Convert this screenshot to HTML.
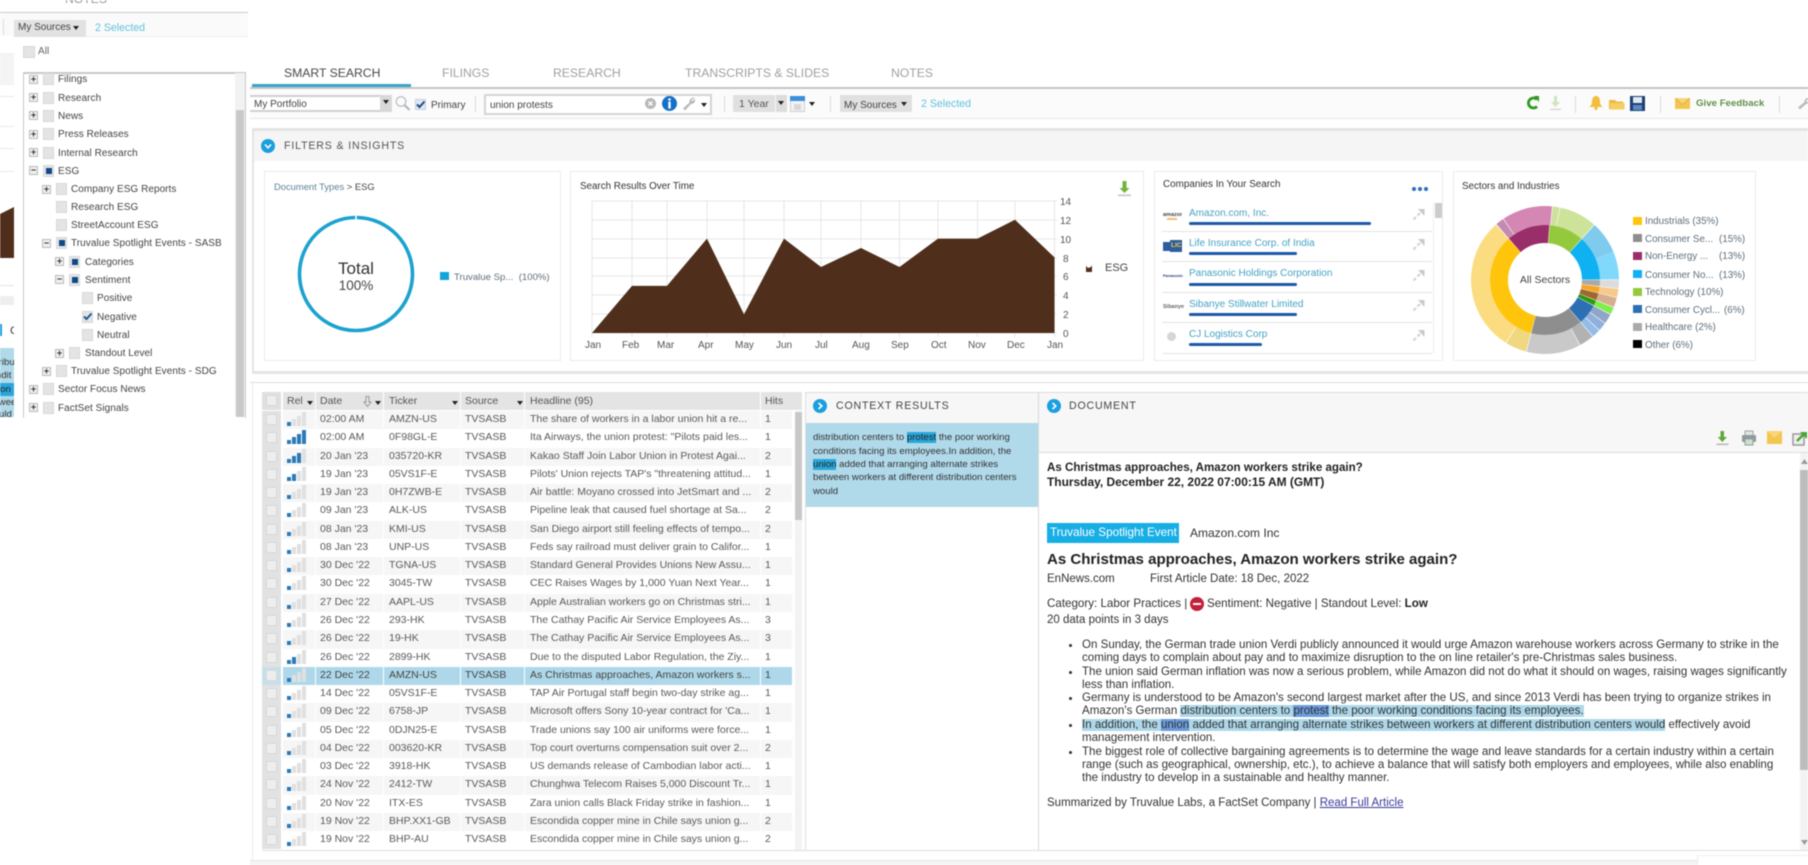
<!DOCTYPE html>
<html><head><meta charset="utf-8"><title>Smart Search</title>
<style>
html,body{margin:0;padding:0;background:#fff}
#p{position:relative;width:1808px;height:865px;overflow:hidden;background:#fff;font-family:"Liberation Sans",sans-serif;color:#444;filter:blur(.45px)}
#p div,#p span.a,#p svg.a{position:absolute}
.t{white-space:nowrap;line-height:14px;height:14px}
.b{box-sizing:border-box}
.cb{box-sizing:border-box;width:11px;height:12px;background:#e4e4e4;border:1px solid #d8d8d8}
.ex{box-sizing:border-box;width:9px;height:9px;border:1px solid #bbb;background:#eee;font-size:9px;line-height:7px;text-align:center;color:#333;font-weight:bold}
.in{width:6px;height:6px;left:2px;top:2px;background:#0d4a87}
.tr{font-size:10px;letter-spacing:.05px;color:#444;margin-top:1px}
.tab{font-size:12.2px;color:#a0a0a0;top:66px}
.lg{font-size:9.8px;color:#5f6f7c;margin-top:1px}
.sq{width:9px;height:8px}
.ax{font-size:10px;color:#555;margin-top:1px}
.co{font-size:10px;color:#45a3c4;left:1189px;margin-top:1px}
.bar{left:1189px;height:3px;background:#1c5aa8;border-radius:2px}
.rl{left:1162px;width:270px;height:1px;background:#e4e4e4}
.r{left:262px;width:530px;height:18.27px;font-size:10.5px;color:#5a5a5a}
.r span{position:absolute;top:1px;line-height:14px;white-space:nowrap}
.r .ck{left:0;top:0;width:19px;height:18.27px;background:#e2e2e2}
.r .ck i{position:absolute;left:4px;top:3px;width:11px;height:11px;box-sizing:border-box;background:#eee;border:1px solid #d8d8d8}
.r svg{position:absolute;left:25px;top:1px}
.r .d{left:58px}.r .k{left:127px}.r .s{left:203px}.r .h{left:268px}.r .n{left:503px}
.o{background:#f6f6f6}.sel{background:#aed8ea;color:#444}.sel .ck{background:#c8dfe9}
.hd{top:392px;height:18px;background:#e4e4e4;font-size:10.5px;color:#555;line-height:18px;white-space:nowrap}
.vl{top:392px;height:458px;width:1px;background:#fff}
.dl{left:1082px;font-size:11.56px;color:#333;line-height:13px;height:13px;white-space:nowrap}
.bu{left:1068px;width:3px;height:3px;background:#333;border-radius:50%}
.hl{background:#aed8ea}.w{background:#6b9bdc}
.ctx{left:813px;font-size:9.6px;color:#333;line-height:13px;white-space:nowrap}
.arr{width:0;height:0;border-left:3px solid transparent;border-right:3px solid transparent;border-top:4px solid #222}
.sep{width:1px;background:#ddd}
</style></head><body><div id="p">
<svg width="0" height="0" style="position:absolute"><defs>
<symbol id="r1" viewBox="0 0 20 14"><rect x="0" y="10" width="4" height="4" fill="#2a7ab8"/><rect x="5" y="7" width="4" height="7" fill="#e0e0e0"/><rect x="10" y="4" width="4" height="10" fill="#e0e0e0"/><rect x="15" y="0" width="4" height="14" fill="#e0e0e0"/></symbol>
<symbol id="r2" viewBox="0 0 20 14"><rect x="0" y="10" width="4" height="4" fill="#2a7ab8"/><rect x="5" y="7" width="4" height="7" fill="#2a7ab8"/><rect x="10" y="4" width="4" height="10" fill="#e0e0e0"/><rect x="15" y="0" width="4" height="14" fill="#e0e0e0"/></symbol>
<symbol id="r3" viewBox="0 0 20 14"><rect x="0" y="10" width="4" height="4" fill="#2a7ab8"/><rect x="5" y="7" width="4" height="7" fill="#2a7ab8"/><rect x="10" y="4" width="4" height="10" fill="#2a7ab8"/><rect x="15" y="0" width="4" height="14" fill="#e0e0e0"/></symbol>
<symbol id="r4" viewBox="0 0 20 14"><rect x="0" y="10" width="4" height="4" fill="#2a7ab8"/><rect x="5" y="7" width="4" height="7" fill="#2a7ab8"/><rect x="10" y="4" width="4" height="10" fill="#2a7ab8"/><rect x="15" y="0" width="4" height="14" fill="#2a7ab8"/></symbol>
<symbol id="exp" viewBox="0 0 14 12"><path d="M13.5 0 L13.5 7 L7 0Z" fill="#c9c9c9"/><path d="M9 4 L6.5 6.5 M5 8 L2.5 10.5" stroke="#d4d4d4" stroke-width="2.2"/></symbol>
</defs></svg>

<!-- left strip behind popup -->
<div style="left:0;top:12px;width:248px;height:1px;background:#c9c9c9"></div>
<div class="t" style="left:65px;top:-8px;font-size:12.2px;color:#999">NOTES</div>
<div style="left:0;top:13px;width:248px;height:23px;background:#fafafa"></div>
<div style="left:3px;top:19px;width:1px;height:16px;background:#ddd"></div>
<div style="left:0;top:53px;width:14px;height:32px;background:#f4f4f4"></div>
<div style="left:0;top:96px;width:14px;height:1px;background:#e8e8e8"></div>
<div style="left:0;top:126px;width:14px;height:1px;background:#e8e8e8"></div>
<div style="left:0;top:148px;width:14px;height:1px;background:#e8e8e8"></div>
<div style="left:0;top:171px;width:14px;height:1px;background:#e8e8e8"></div>
<svg class="a" style="left:0;top:200px" width="14" height="62"><path d="M0 14 L14 7 V58 H0Z" fill="#4f2f1c"/></svg>
<div style="left:0;top:285px;width:14px;height:1px;background:#e4e4e4"></div>
<div style="left:0;top:296px;width:14px;height:9px;background:#eee"></div>
<div class="t" style="left:10px;top:324px;font-size:11px;color:#333">C</div>
<div style="left:0;top:324px;width:2px;height:12px;background:#1b9fe0"></div>
<div style="left:0;top:348px;width:14px;height:69px;background:#b0d9ea;overflow:hidden">
 <div class="ctx" style="left:-4px;top:8px;color:#333">tribu</div>
 <div class="ctx" style="left:-4px;top:21px;color:#333">ndit</div>
 <div class="ctx" style="left:-2px;top:35px;background:#29a7dc;width:16px;color:#222">ion</div>
 <div class="ctx" style="left:-4px;top:48px;color:#333">twee</div>
 <div class="ctx" style="left:-1px;top:60px;color:#333">uld</div>
</div>

<!-- popup -->
<div style="left:14px;top:36px;width:234px;height:381px;background:#fff"></div>
<div style="left:86px;top:36px;width:162px;height:1px;background:#eee"></div>
<div class="b" style="left:14px;top:20px;width:72px;height:17px;background:#e2e2e2"></div>
<div class="t" style="left:18px;top:21px;font-size:10px;color:#444">My Sources</div>
<div class="arr" style="left:73px;top:26px"></div>
<div class="t" style="left:95px;top:21px;font-size:10.6px;color:#62c3df">2 Selected</div>
<div class="cb" style="left:23px;top:46px;width:12px;height:12px"></div>
<div class="t tr" style="left:38px;top:44px;color:#666">All</div>
<div class="b" style="left:23px;top:72px;width:223px;height:346px;border:1px solid #c8c8c8;border-top-width:2px;border-bottom:0"></div>
<div style="left:235px;top:73px;width:10px;height:344px;background:#f2f2f2"></div>
<div style="left:236px;top:110px;width:8px;height:307px;background:#c9c9c9"></div>

<div class="ex" style="left:29px;top:75px">+</div><div class="cb" style="left:43px;top:73px"></div><div class="t tr" style="left:58px;top:72px">Filings</div>
<div class="ex" style="left:29px;top:93px">+</div><div class="cb" style="left:43px;top:92px"></div><div class="t tr" style="left:58px;top:91px">Research</div>
<div class="ex" style="left:29px;top:111px">+</div><div class="cb" style="left:43px;top:110px"></div><div class="t tr" style="left:58px;top:109px">News</div>
<div class="ex" style="left:29px;top:130px">+</div><div class="cb" style="left:43px;top:128px"></div><div class="t tr" style="left:58px;top:127px">Press Releases</div>
<div class="ex" style="left:29px;top:148px">+</div><div class="cb" style="left:43px;top:147px"></div><div class="t tr" style="left:58px;top:146px">Internal Research</div>
<div class="ex" style="left:29px;top:166px">−</div><div class="cb" style="left:43px;top:165px"><div class="in" style="left:1.5px;top:2px"></div></div><div class="t tr" style="left:58px;top:164px">ESG</div>
<div class="ex" style="left:42px;top:185px">+</div><div class="cb" style="left:56px;top:183px"></div><div class="t tr" style="left:71px;top:182px">Company ESG Reports</div>
<div class="cb" style="left:56px;top:201px"></div><div class="t tr" style="left:71px;top:200px">Research ESG</div>
<div class="cb" style="left:56px;top:219px"></div><div class="t tr" style="left:71px;top:218px">StreetAccount ESG</div>
<div class="ex" style="left:42px;top:239px">−</div><div class="cb" style="left:56px;top:237px"><div class="in" style="left:1.5px;top:2px"></div></div><div class="t tr" style="left:71px;top:236px">Truvalue Spotlight Events - SASB</div>
<div class="ex" style="left:55px;top:257px">+</div><div class="cb" style="left:69px;top:256px"><div class="in" style="left:1.5px;top:2px"></div></div><div class="t tr" style="left:85px;top:255px">Categories</div>
<div class="ex" style="left:55px;top:275px">−</div><div class="cb" style="left:69px;top:274px"><div class="in" style="left:1.5px;top:2px"></div></div><div class="t tr" style="left:85px;top:273px">Sentiment</div>
<div class="cb" style="left:82px;top:292px"></div><div class="t tr" style="left:97px;top:291px">Positive</div>
<div class="cb" style="left:82px;top:311px"></div><svg class="a" style="left:82px;top:311px" width="11" height="11"><path d="M2 5.5 L4.5 8 L9.5 2.5" fill="none" stroke="#1d5b96" stroke-width="2"/></svg><div class="t tr" style="left:97px;top:310px">Negative</div>
<div class="cb" style="left:82px;top:329px"></div><div class="t tr" style="left:97px;top:328px">Neutral</div>
<div class="ex" style="left:55px;top:349px">+</div><div class="cb" style="left:69px;top:347px"></div><div class="t tr" style="left:85px;top:346px">Standout Level</div>
<div class="ex" style="left:42px;top:367px">+</div><div class="cb" style="left:56px;top:365px"></div><div class="t tr" style="left:71px;top:364px">Truvalue Spotlight Events - SDG</div>
<div class="ex" style="left:29px;top:385px">+</div><div class="cb" style="left:43px;top:383px"></div><div class="t tr" style="left:58px;top:382px">Sector Focus News</div>
<div class="ex" style="left:29px;top:403px">+</div><div class="cb" style="left:43px;top:402px"></div><div class="t tr" style="left:58px;top:401px">FactSet Signals</div>

<!-- tabs -->
<div class="t tab" style="left:284px;color:#4a4a4a">SMART SEARCH</div>
<div class="t tab" style="left:442px">FILINGS</div>
<div class="t tab" style="left:553px">RESEARCH</div>
<div class="t tab" style="left:685px">TRANSCRIPTS &amp; SLIDES</div>
<div class="t tab" style="left:891px">NOTES</div>
<div style="left:250px;top:87px;width:1558px;height:2px;background:#c4c4c4"></div>
<div style="left:252px;top:84px;width:159px;height:3px;background:#38a6c9"></div>

<!-- toolbar -->
<div style="left:250px;top:89px;width:1558px;height:29px;background:#fbfbfb;border-bottom:1px solid #e6e6e6"></div>
<div class="b" style="left:250px;top:95px;width:142px;height:17px;background:#fff;border:1px solid #d0d0d0;border-width:2px 1px 2px 0"></div>
<div class="t" style="left:254px;top:98px;font-size:10px;color:#444">My Portfolio</div>
<div style="left:380px;top:95px;width:12px;height:17px;background:#d8d8d8"></div>
<div class="arr" style="left:383px;top:100px"></div>
<svg class="a" style="left:394px;top:95px" width="17" height="16"><circle cx="7" cy="6.5" r="4.8" fill="none" stroke="#c0c8d0" stroke-width="1.5"/><path d="M10.5 10 L15.5 15" stroke="#b4b4b4" stroke-width="2"/></svg>
<div class="b" style="left:415px;top:99px;width:11px;height:11px;background:#dfe7f1;border:1px solid #c8d2de"></div>
<svg class="a" style="left:415px;top:99px" width="11" height="11"><path d="M2 5.5 L4.5 8 L9.5 2.5" fill="none" stroke="#1d4f88" stroke-width="2"/></svg>
<div class="t" style="left:431px;top:98.500px;font-size:10px;color:#444">Primary</div>
<div class="sep" style="left:475px;top:96px;height:16px"></div>
<div class="b" style="left:484px;top:94px;width:228px;height:21px;background:#fff;border:2px solid #d4d4d4"></div>
<div class="t" style="left:490px;top:99px;font-size:10px;color:#444">union protests</div>
<svg class="a" style="left:645px;top:98px" width="11" height="11"><circle cx="5.5" cy="5.5" r="5.5" fill="#b8b8b8"/><path d="M3.5 3.5 L7.500 7.500 M7.500 3.500 L3.500 7.500" stroke="#fff" stroke-width="1.300"/></svg>
<svg class="a" style="left:662px;top:96px" width="15" height="15"><circle cx="7.500" cy="7.500" r="7.500" fill="#1570c9"/><rect x="6.300" y="2.400" width="2.400" height="2.200" fill="#fff"/><rect x="6.300" y="5.600" width="2.400" height="7" fill="#fff"/></svg>
<svg class="a" style="left:682px;top:96px" width="14" height="15"><path d="M13 2 A4 4 0 0 0 7.500 6.500 L1 12.500 L3 14.500 L9 8 A4 4 0 0 0 13 3 L10.500 5 L9 4Z" fill="#b9b9b9"/></svg>
<div class="arr" style="left:701px;top:103px"></div>
<div class="sep" style="left:724px;top:96px;height:16px"></div>
<div style="left:733px;top:95px;width:42px;height:17px;background:#e0e0e0"></div>
<div class="t" style="left:739px;top:97px;font-size:10.500px;color:#555">1 Year</div>
<div style="left:776px;top:95px;width:11px;height:17px;background:#dcdcdc"></div>
<div class="arr" style="left:778px;top:101px"></div>
<svg class="a" style="left:790px;top:96px" width="15" height="16"><rect x=".5" y=".5" width="14" height="15" fill="#f3f3f3" stroke="#cfcfcf"/><rect width="15" height="5" fill="#3a90dc"/><rect x="4" y="8" width="7" height="6" fill="#d8d8d8"/></svg>
<div class="arr" style="left:809px;top:102px"></div>
<div class="sep" style="left:830px;top:96px;height:16px"></div>
<div style="left:840px;top:95px;width:72px;height:17px;background:#e0e0e0"></div>
<div class="t" style="left:844px;top:98.500px;font-size:10px;color:#444">My Sources</div>
<div class="arr" style="left:901px;top:102px"></div>
<div class="t" style="left:921px;top:97px;font-size:10.600px;color:#62c3df">2 Selected</div>

<svg class="a" style="left:1526px;top:96px" width="14" height="14"><path d="M11 3.500 A5 5 0 1 0 11 10.500" fill="none" stroke="#2f9a22" stroke-width="2.800"/><path d="M8 0 L13 0 L13 6Z" fill="#2f9a22"/></svg>
<svg class="a" style="left:1549px;top:95px" width="13" height="16"><path d="M5 1 H8 V7 H11 L6.500 12 L2 7 H5Z" fill="#cfe5bd"/><rect x="1" y="13.500" width="11" height="1.600" fill="#dcdcdc"/></svg>
<div class="sep" style="left:1575px;top:96px;height:17px"></div>
<svg class="a" style="left:1589px;top:96px" width="14" height="14"><path d="M7 0 C4 0 3 3 3 6 C3 9 1 10 .5 11 H13.500 C13 10 11 9 11 6 C11 3 10 0 7 0Z" fill="#f3bf3a"/><circle cx="7" cy="12.500" r="1.600" fill="#f3bf3a"/></svg>
<svg class="a" style="left:1609px;top:98px" width="16" height="12"><path d="M0 2 H6 L7.500 3.500 H14 V11 H0Z" fill="#efb93c"/><rect x="1" y="5" width="14.500" height="6.500" fill="#f6cf62"/></svg>
<svg class="a" style="left:1630px;top:96px" width="15" height="15"><rect width="15" height="15" fill="#1c3f75"/><rect x="3" y="1" width="9" height="6" fill="#dfe8f3"/><rect x="3" y="9" width="9" height="5" fill="#5c8ac0"/></svg>
<div class="sep" style="left:1660px;top:96px;height:17px"></div>
<svg class="a" style="left:1675px;top:98px" width="15" height="11"><rect width="15" height="11" fill="#f3c650"/><path d="M0 0 L7.500 6.500 L15 0" fill="#f7d67a" stroke="#d9a93a" stroke-width=".8"/></svg>
<div class="t" style="left:1696px;top:97px;font-size:9.600px;font-weight:bold;color:#5f9048;letter-spacing:.05px">Give Feedback</div>
<div class="sep" style="left:1779px;top:96px;height:17px"></div>
<svg class="a" style="left:1797px;top:97px" width="14" height="13"><path d="M13 1 A4 4 0 0 0 7.500 5 L1 10.500 L3 12.500 L9 7 A4 4 0 0 0 13 3 L10.500 5 L9 4Z" fill="#bbb"/></svg>

<!-- filters panel -->
<div style="left:252px;top:128px;width:1556px;height:246px;background:#f5f5f5;box-sizing:border-box;border-top:3px solid #e4e4e4;border-bottom:3px solid #e4e4e4;border-left:2px solid #e4e4e4"></div>
<div style="left:254px;top:161px;width:1554px;height:210px;background:#fff"></div>
<svg class="a" style="left:261px;top:139px" width="14" height="14"><circle cx="7" cy="7" r="7" fill="#1b9fe0"/><path d="M4 5.500 L7 8.800 L10 5.500" fill="none" stroke="#fff" stroke-width="1.600"/></svg>
<div class="t" style="left:284px;top:139px;font-size:10.600px;letter-spacing:.85px;color:#555">FILTERS &amp; INSIGHTS</div>

<div class="b" style="left:264px;top:171px;width:297px;height:190px;border:1px solid #ececec"></div>
<div class="b" style="left:570px;top:171px;width:574px;height:190px;border:1px solid #ececec"></div>
<div class="b" style="left:1154px;top:171px;width:289px;height:190px;border:1px solid #ececec"></div>
<div class="b" style="left:1453px;top:171px;width:303px;height:190px;border:1px solid #ececec"></div>

<!-- card 1 -->
<div class="t" style="left:274px;top:180px;font-size:9.400px;color:#5d8199">Document Types <span style="color:#444">&gt; ESG</span></div>
<svg class="a" style="left:296px;top:214px" width="120" height="120"><circle cx="60" cy="60" r="56.500" fill="none" stroke="#1ba2cf" stroke-width="3.600" pathLength="360" stroke-dasharray="358.400 1.600" transform="rotate(-89 60 60)"/></svg>
<div class="t" style="left:296px;top:260px;width:120px;text-align:center;font-size:17px;line-height:17px;color:#333">Total</div>
<div class="t" style="left:296px;top:279px;width:120px;text-align:center;font-size:13.500px;color:#444">100%</div>
<div class="sq" style="left:440px;top:272px;background:#12a5db;width:9px;height:8px"></div>
<div class="t lg" style="left:454px;top:270px;font-size:9.600px">Truvalue Sp...&nbsp; (100%)</div>

<!-- card 2 chart -->
<div class="t" style="left:580px;top:180px;font-size:9.800px;color:#333">Search Results Over Time</div>
<svg class="a" style="left:570px;top:190px" width="520" height="160">
<g stroke="#e6e6e6" stroke-width="1"><path d="M22 11H487M22 30H487M22 49H487M22 68H487M22 86H487M22 105H487M22 124H487M22 143H487"/><path d="M22 11V147M62 11V147M97 11V147M137 11V147M174 11V147M214 11V147M251 11V147M291 11V147M329.500 11V147M368 11V147M407.500 11V147M445 11V147M484.500 11V147"/></g>
<path d="M22 143 L62 95.900 L97 95.900 L137 48.600 L174 124.200 L214 48.600 L251 77 L291 58 L329.500 77 L368 48.600 L407.500 48.600 L445 29.800 L484.500 67.400 V143Z" fill="#4f2f1c"/>
</svg>
<div class="t ax" style="left:585px;top:338px">Jan</div><div class="t ax" style="left:622px;top:338px">Feb</div><div class="t ax" style="left:657px;top:338px">Mar</div><div class="t ax" style="left:698px;top:338px">Apr</div><div class="t ax" style="left:735px;top:338px">May</div><div class="t ax" style="left:776px;top:338px">Jun</div><div class="t ax" style="left:815px;top:338px">Jul</div><div class="t ax" style="left:852px;top:338px">Aug</div><div class="t ax" style="left:891px;top:338px">Sep</div><div class="t ax" style="left:931px;top:338px">Oct</div><div class="t ax" style="left:968px;top:338px">Nov</div><div class="t ax" style="left:1007px;top:338px">Dec</div><div class="t ax" style="left:1047px;top:338px">Jan</div>
<div class="t ax" style="left:1060px;top:195px">14</div><div class="t ax" style="left:1060px;top:214px">12</div><div class="t ax" style="left:1060px;top:233px">10</div><div class="t ax" style="left:1063px;top:252px">8</div><div class="t ax" style="left:1063px;top:270px">6</div><div class="t ax" style="left:1063px;top:289px">4</div><div class="t ax" style="left:1063px;top:308px">2</div><div class="t ax" style="left:1063px;top:327px">0</div>
<svg class="a" style="left:1086px;top:265px" width="7" height="7"><path d="M0 1 L2 3 L5 2 L6 0 V7 H0Z" fill="#4f2f1c"/></svg>
<div class="t" style="left:1105px;top:261px;font-size:11px;color:#444">ESG</div>
<svg class="a" style="left:1117px;top:180px" width="15" height="17"><path d="M5.500 1 H9.500 V8 H12.500 L7.500 13 L2.500 8 H5.500Z" fill="#6fb53a"/><rect x="1" y="14.500" width="13" height="1.600" fill="#c5c5c5"/></svg>

<!-- card 3 -->
<div class="t" style="left:1163px;top:178px;font-size:9.900px;color:#333">Companies In Your Search</div>
<div style="left:1412px;top:187px;width:4px;height:4px;border-radius:50%;background:#2a6fc0"></div>
<div style="left:1418px;top:187px;width:4px;height:4px;border-radius:50%;background:#2a6fc0"></div>
<div style="left:1424px;top:187px;width:4px;height:4px;border-radius:50%;background:#2a6fc0"></div>

<div class="t" style="left:1163px;top:208px;font-size:5.500px;color:#444;font-weight:bold;width:19px;overflow:hidden">amazon</div>
<div style="left:1167px;top:218px;width:10px;height:1.500px;background:#f0c070"></div>
<div style="left:1163px;top:242px;width:18px;height:9px;background:#2c5d9e"></div><div class="t" style="left:1170px;top:240px;font-size:6.500px;font-weight:bold;color:#f4d03f;height:12px;line-height:12px;background:#2c5d9e;padding:0 1px">LIC</div>
<div class="t" style="left:1163px;top:269px;font-size:4px;color:#1d3d6e;font-weight:bold">Panasonic</div>
<div class="t" style="left:1163px;top:300px;font-size:5.500px;color:#666;font-weight:bold">Sibanye</div>
<div style="left:1167px;top:332px;width:9px;height:9px;background:#d6d6d6;border-radius:50%"></div>

<div class="t co" style="top:206px">Amazon.com, Inc.</div><div class="bar" style="top:222px;width:182px"></div><div class="rl" style="top:231px"></div>
<div class="t co" style="top:236px">Life Insurance Corp. of India</div><div class="bar" style="top:252px;width:108px"></div><div class="rl" style="top:261px"></div>
<div class="t co" style="top:266px">Panasonic Holdings Corporation</div><div class="bar" style="top:283px;width:108px"></div><div class="rl" style="top:292px"></div>
<div class="t co" style="top:297px">Sibanye Stillwater Limited</div><div class="bar" style="top:313px;width:108px"></div><div class="rl" style="top:322px"></div>
<div class="t co" style="top:327px">CJ Logistics Corp</div><div class="bar" style="top:343px;width:73px"></div><div class="rl" style="top:353px"></div>
<svg class="a" style="left:1411px;top:209px" width="14" height="12"><use href="#exp"/></svg>
<svg class="a" style="left:1411px;top:239px" width="14" height="12"><use href="#exp"/></svg>
<svg class="a" style="left:1411px;top:270px" width="14" height="12"><use href="#exp"/></svg>
<svg class="a" style="left:1411px;top:300px" width="14" height="12"><use href="#exp"/></svg>
<svg class="a" style="left:1411px;top:330px" width="14" height="12"><use href="#exp"/></svg>
<div style="left:1433px;top:203px;width:1px;height:150px;background:#eee"></div>
<div style="left:1435px;top:203px;width:7px;height:15px;background:#ccc"></div>

<!-- card 4 -->
<div class="t" style="left:1462px;top:180px;font-size:9.800px;color:#333">Sectors and Industries</div>
<svg class="a" style="left:1464px;top:199px" width="162" height="162"><g fill="none" transform="translate(81 81) rotate(-90)">
<g stroke-width="19">
<circle r="64.500" pathLength="360" stroke="#fcdc80" stroke-dasharray="106.500 360" transform="rotate(212)"/>
<circle r="64.500" pathLength="360" stroke="#efd880" stroke-dasharray="16.500 360" transform="rotate(195)"/>
<circle r="64.500" pathLength="360" stroke="#c9c9c9" stroke-dasharray="42.500 360" transform="rotate(152)"/>
<circle r="64.500" pathLength="360" stroke="#b2b2b2" stroke-dasharray="11.500 360" transform="rotate(140)"/>
<circle r="64.500" pathLength="360" stroke="#93bde8" stroke-dasharray="6.500 360" transform="rotate(133)"/>
<circle r="64.500" pathLength="360" stroke="#8fb0dc" stroke-dasharray="6.500 360" transform="rotate(126)"/>
<circle r="64.500" pathLength="360" stroke="#8fa6c8" stroke-dasharray="7.500 360" transform="rotate(118)"/>
<circle r="64.500" pathLength="360" stroke="#7fee4b" stroke-dasharray="5.500 360" transform="rotate(112)"/>
<circle r="64.500" pathLength="360" stroke="#d4b08f" stroke-dasharray="7.500 360" transform="rotate(104)"/>
<circle r="64.500" pathLength="360" stroke="#f7c98a" stroke-dasharray="6.500 360" transform="rotate(97)"/>
<circle r="64.500" pathLength="360" stroke="#dcdcdc" stroke-dasharray="6.500 360" transform="rotate(90)"/>
<circle r="64.500" pathLength="360" stroke="#80d8fb" stroke-dasharray="22 360" transform="rotate(67.500)"/>
<circle r="64.500" pathLength="360" stroke="#7fcbee" stroke-dasharray="25.500 360" transform="rotate(42)"/>
<circle r="64.500" pathLength="360" stroke="#cde39a" stroke-dasharray="29.500 360" transform="rotate(12)"/>
<circle r="64.500" pathLength="360" stroke="#cfe09e" stroke-dasharray="5.500 360" transform="rotate(6)"/>
<circle r="64.500" pathLength="360" stroke="#d587b4" stroke-dasharray="39.500 360" transform="rotate(326)"/>
<circle r="64.500" pathLength="360" stroke="#c58ab0" stroke-dasharray="6.500 360" transform="rotate(319)"/>
</g>
<g stroke-width="18">
<circle r="46" pathLength="360" stroke="#fec50c" stroke-dasharray="123.500 360" transform="rotate(195)"/>
<circle r="46" pathLength="360" stroke="#8e8e8e" stroke-dasharray="54.500 360" transform="rotate(140)"/>
<circle r="46" pathLength="360" stroke="#2d6fb3" stroke-dasharray="21.500 360" transform="rotate(118)"/>
<circle r="46" pathLength="360" stroke="#2d9a12" stroke-dasharray="5.500 360" transform="rotate(112)"/>
<circle r="46" pathLength="360" stroke="#a0662f" stroke-dasharray="7.500 360" transform="rotate(104)"/>
<circle r="46" pathLength="360" stroke="#f5a623" stroke-dasharray="6.500 360" transform="rotate(97)"/>
<circle r="46" pathLength="360" stroke="#a8a8a8" stroke-dasharray="6.500 360" transform="rotate(90)"/>
<circle r="46" pathLength="360" stroke="#0fb1f2" stroke-dasharray="47.500 360" transform="rotate(42)"/>
<circle r="46" pathLength="360" stroke="#95c93d" stroke-dasharray="36.500 360" transform="rotate(5)"/>
<circle r="46" pathLength="360" stroke="#992e6b" stroke-dasharray="45.500 360" transform="rotate(319)"/>
</g></g></svg>
<div class="t" style="left:1515px;top:273px;width:60px;text-align:center;font-size:10.500px;color:#444">All Sectors</div>

<div class="sq" style="left:1633px;top:217px;background:#fec50c"></div><div class="t lg" style="left:1645px;top:214px">Industrials (35%)</div>
<div class="sq" style="left:1633px;top:234px;background:#8e8e8e"></div><div class="t lg" style="left:1645px;top:232px">Consumer Se...</div><div class="t lg" style="left:1719px;top:232px">(15%)</div>
<div class="sq" style="left:1633px;top:252px;background:#992e6b"></div><div class="t lg" style="left:1645px;top:249px">Non-Energy ...</div><div class="t lg" style="left:1719px;top:249px">(13%)</div>
<div class="sq" style="left:1633px;top:270px;background:#0fb1f2"></div><div class="t lg" style="left:1645px;top:268px">Consumer No...</div><div class="t lg" style="left:1719px;top:268px">(13%)</div>
<div class="sq" style="left:1633px;top:288px;background:#95c93d"></div><div class="t lg" style="left:1645px;top:285px">Technology (10%)</div>
<div class="sq" style="left:1633px;top:305px;background:#2d6fb3"></div><div class="t lg" style="left:1645px;top:303px">Consumer Cycl...</div><div class="t lg" style="left:1724px;top:303px">(6%)</div>
<div class="sq" style="left:1633px;top:323px;background:#aaa"></div><div class="t lg" style="left:1645px;top:320px">Healthcare (2%)</div>
<div class="sq" style="left:1633px;top:340px;background:#000"></div><div class="t lg" style="left:1645px;top:338px">Other (6%)</div>

<!-- lower section -->
<div style="left:250px;top:382px;width:1558px;height:1px;background:#dedede"></div>
<div style="left:252px;top:383px;width:1px;height:478px;background:#ececec"></div>

<div class="hd" style="left:262px;width:19px;background:#e0e0e0"></div>
<div class="cb" style="left:266px;top:395px;width:11px;height:11px;background:#eee"></div>
<div class="hd" style="left:283px;width:32px;padding-left:4px;box-sizing:border-box">Rel</div><div class="arr" style="left:307px;top:401px"></div>
<div class="hd" style="left:316px;width:67px;padding-left:4px;box-sizing:border-box">Date</div>
<svg class="a" style="left:363px;top:396px" width="9" height="11"><path d="M3 0.500 H6 V6 H8 L4.500 10.500 L1 6 H3Z" fill="none" stroke="#999"/></svg><div class="arr" style="left:375px;top:401px"></div>
<div class="hd" style="left:384px;width:76px;padding-left:5px;box-sizing:border-box">Ticker</div><div class="arr" style="left:452px;top:401px"></div>
<div class="hd" style="left:461px;width:63px;padding-left:4px;box-sizing:border-box">Source</div><div class="arr" style="left:517px;top:401px"></div>
<div class="hd" style="left:525px;width:235px;padding-left:5px;box-sizing:border-box">Headline (95)</div>
<div class="hd" style="left:761px;width:41px;padding-left:4px;box-sizing:border-box">Hits</div>

<div class="r o" style="top:411px"><span class="ck"><i></i></span><svg width="20" height="14"><use href="#r1"/></svg><span class="d">02:00 AM</span><span class="k">AMZN-US</span><span class="s">TVSASB</span><span class="h">The share of workers in a labor union hit a re...</span><span class="n">1</span></div>
<div class="r" style="top:429.270px"><span class="ck"><i></i></span><svg width="20" height="14"><use href="#r4"/></svg><span class="d">02:00 AM</span><span class="k">0F98GL-E</span><span class="s">TVSASB</span><span class="h">Ita Airways, the union protest: "Pilots paid les...</span><span class="n">1</span></div>
<div class="r o" style="top:447.540px"><span class="ck"><i></i></span><svg width="20" height="14"><use href="#r3"/></svg><span class="d">20 Jan '23</span><span class="k">035720-KR</span><span class="s">TVSASB</span><span class="h">Kakao Staff Join Labor Union in Protest Agai...</span><span class="n">2</span></div>
<div class="r" style="top:465.810px"><span class="ck"><i></i></span><svg width="20" height="14"><use href="#r2"/></svg><span class="d">19 Jan '23</span><span class="k">05VS1F-E</span><span class="s">TVSASB</span><span class="h">Pilots' Union rejects TAP's "threatening attitud...</span><span class="n">1</span></div>
<div class="r o" style="top:484.080px"><span class="ck"><i></i></span><svg width="20" height="14"><use href="#r1"/></svg><span class="d">19 Jan '23</span><span class="k">0H7ZWB-E</span><span class="s">TVSASB</span><span class="h">Air battle: Moyano crossed into JetSmart and ...</span><span class="n">2</span></div>
<div class="r" style="top:502.350px"><span class="ck"><i></i></span><svg width="20" height="14"><use href="#r1"/></svg><span class="d">09 Jan '23</span><span class="k">ALK-US</span><span class="s">TVSASB</span><span class="h">Pipeline leak that caused fuel shortage at Sa...</span><span class="n">2</span></div>
<div class="r o" style="top:520.620px"><span class="ck"><i></i></span><svg width="20" height="14"><use href="#r1"/></svg><span class="d">08 Jan '23</span><span class="k">KMI-US</span><span class="s">TVSASB</span><span class="h">San Diego airport still feeling effects of tempo...</span><span class="n">2</span></div>
<div class="r" style="top:538.890px"><span class="ck"><i></i></span><svg width="20" height="14"><use href="#r1"/></svg><span class="d">08 Jan '23</span><span class="k">UNP-US</span><span class="s">TVSASB</span><span class="h">Feds say railroad must deliver grain to Califor...</span><span class="n">1</span></div>
<div class="r o" style="top:557.160px"><span class="ck"><i></i></span><svg width="20" height="14"><use href="#r1"/></svg><span class="d">30 Dec '22</span><span class="k">TGNA-US</span><span class="s">TVSASB</span><span class="h">Standard General Provides Unions New Assu...</span><span class="n">1</span></div>
<div class="r" style="top:575.430px"><span class="ck"><i></i></span><svg width="20" height="14"><use href="#r1"/></svg><span class="d">30 Dec '22</span><span class="k">3045-TW</span><span class="s">TVSASB</span><span class="h">CEC Raises Wages by 1,000 Yuan Next Year...</span><span class="n">1</span></div>
<div class="r o" style="top:593.700px"><span class="ck"><i></i></span><svg width="20" height="14"><use href="#r1"/></svg><span class="d">27 Dec '22</span><span class="k">AAPL-US</span><span class="s">TVSASB</span><span class="h">Apple Australian workers go on Christmas stri...</span><span class="n">1</span></div>
<div class="r" style="top:611.970px"><span class="ck"><i></i></span><svg width="20" height="14"><use href="#r1"/></svg><span class="d">26 Dec '22</span><span class="k">293-HK</span><span class="s">TVSASB</span><span class="h">The Cathay Pacific Air Service Employees As...</span><span class="n">3</span></div>
<div class="r o" style="top:630.240px"><span class="ck"><i></i></span><svg width="20" height="14"><use href="#r1"/></svg><span class="d">26 Dec '22</span><span class="k">19-HK</span><span class="s">TVSASB</span><span class="h">The Cathay Pacific Air Service Employees As...</span><span class="n">3</span></div>
<div class="r" style="top:648.510px"><span class="ck"><i></i></span><svg width="20" height="14"><use href="#r2"/></svg><span class="d">26 Dec '22</span><span class="k">2899-HK</span><span class="s">TVSASB</span><span class="h">Due to the disputed Labor Regulation, the Ziy...</span><span class="n">1</span></div>
<div class="r sel" style="top:666.780px"><span class="ck"><i></i></span><svg width="20" height="14"><use href="#r1"/></svg><span class="d">22 Dec '22</span><span class="k">AMZN-US</span><span class="s">TVSASB</span><span class="h">As Christmas approaches, Amazon workers s...</span><span class="n">1</span></div>
<div class="r" style="top:685.050px"><span class="ck"><i></i></span><svg width="20" height="14"><use href="#r1"/></svg><span class="d">14 Dec '22</span><span class="k">05VS1F-E</span><span class="s">TVSASB</span><span class="h">TAP Air Portugal staff begin two-day strike ag...</span><span class="n">1</span></div>
<div class="r o" style="top:703.320px"><span class="ck"><i></i></span><svg width="20" height="14"><use href="#r1"/></svg><span class="d">09 Dec '22</span><span class="k">6758-JP</span><span class="s">TVSASB</span><span class="h">Microsoft offers Sony 10-year contract for 'Ca...</span><span class="n">1</span></div>
<div class="r" style="top:721.590px"><span class="ck"><i></i></span><svg width="20" height="14"><use href="#r1"/></svg><span class="d">05 Dec '22</span><span class="k">0DJN25-E</span><span class="s">TVSASB</span><span class="h">Trade unions say 100 air uniforms were force...</span><span class="n">1</span></div>
<div class="r o" style="top:739.860px"><span class="ck"><i></i></span><svg width="20" height="14"><use href="#r1"/></svg><span class="d">04 Dec '22</span><span class="k">003620-KR</span><span class="s">TVSASB</span><span class="h">Top court overturns compensation suit over 2...</span><span class="n">2</span></div>
<div class="r" style="top:758.130px"><span class="ck"><i></i></span><svg width="20" height="14"><use href="#r1"/></svg><span class="d">03 Dec '22</span><span class="k">3918-HK</span><span class="s">TVSASB</span><span class="h">US demands release of Cambodian labor acti...</span><span class="n">1</span></div>
<div class="r o" style="top:776.400px"><span class="ck"><i></i></span><svg width="20" height="14"><use href="#r1"/></svg><span class="d">24 Nov '22</span><span class="k">2412-TW</span><span class="s">TVSASB</span><span class="h">Chunghwa Telecom Raises 5,000 Discount Tr...</span><span class="n">1</span></div>
<div class="r" style="top:794.670px"><span class="ck"><i></i></span><svg width="20" height="14"><use href="#r1"/></svg><span class="d">20 Nov '22</span><span class="k">ITX-ES</span><span class="s">TVSASB</span><span class="h">Zara union calls Black Friday strike in fashion...</span><span class="n">1</span></div>
<div class="r o" style="top:812.940px"><span class="ck"><i></i></span><svg width="20" height="14"><use href="#r1"/></svg><span class="d">19 Nov '22</span><span class="k">BHP.XX1-GB</span><span class="s">TVSASB</span><span class="h">Escondida copper mine in Chile says union g...</span><span class="n">2</span></div>
<div class="r" style="top:831.210px"><span class="ck"><i></i></span><svg width="20" height="14"><use href="#r1"/></svg><span class="d">19 Nov '22</span><span class="k">BHP-AU</span><span class="s">TVSASB</span><span class="h">Escondida copper mine in Chile says union g...</span><span class="n">2</span></div>

<div class="vl" style="left:281px;width:2px"></div><div class="vl" style="left:315px"></div><div class="vl" style="left:383px"></div><div class="vl" style="left:460px"></div><div class="vl" style="left:524px"></div><div class="vl" style="left:760px"></div>
<div style="left:795px;top:411px;width:7px;height:439px;background:#f3f3f3"></div>
<div style="left:795px;top:412px;width:7px;height:108px;background:#c8c8c8"></div>

<!-- context -->
<div style="left:805px;top:392px;width:233px;height:1px;background:#dcdcdc"></div>
<div style="left:805px;top:392px;width:1px;height:458px;background:#e0e0e0"></div>
<div style="left:806px;top:393px;width:232px;height:30px;background:#f7f7f7"></div>
<svg class="a" style="left:813px;top:399px" width="14" height="14"><circle cx="7" cy="7" r="7" fill="#1b9fe0"/><path d="M5.500 4 L8.800 7 L5.500 10" fill="none" stroke="#fff" stroke-width="1.600"/></svg>
<div class="t" style="left:836px;top:399px;font-size:10.600px;letter-spacing:.8px;color:#444">CONTEXT RESULTS</div>
<div style="left:806px;top:423px;width:232px;height:84px;background:#b0d9ea"></div>
<div class="ctx" style="top:431px">distribution centers to <span style="background:#29a7dc;color:#222">protest</span> the poor working</div>
<div class="ctx" style="top:445px">conditions facing its employees.In addition, the</div>
<div class="ctx" style="top:458px"><span style="background:#29a7dc;color:#222">union</span> added that arranging alternate strikes</div>
<div class="ctx" style="top:471px">between workers at different distribution centers</div>
<div class="ctx" style="top:485px">would</div>

<!-- document -->
<div style="left:1038px;top:392px;width:770px;height:1px;background:#dcdcdc"></div>
<div style="left:1038px;top:392px;width:1px;height:458px;background:#d8d8d8"></div>
<div style="left:1039px;top:393px;width:769px;height:59px;background:#f7f7f7;border-bottom:1px solid #ddd"></div>
<svg class="a" style="left:1047px;top:399px" width="14" height="14"><circle cx="7" cy="7" r="7" fill="#1b9fe0"/><path d="M5.500 4 L8.800 7 L5.500 10" fill="none" stroke="#fff" stroke-width="1.600"/></svg>
<div class="t" style="left:1069px;top:399px;font-size:10.600px;letter-spacing:.8px;color:#444">DOCUMENT</div>
<svg class="a" style="left:1716px;top:430px" width="13" height="16"><path d="M4.500 1 H8 V7 H11 L6.300 12 L1.700 7 H4.500Z" fill="#5fa83a"/><rect x=".5" y="13.500" width="12" height="1.600" fill="#b8b8b8"/></svg>
<svg class="a" style="left:1742px;top:430px" width="14" height="16"><rect x="3" y="1" width="8" height="5" fill="#e4e4e4" stroke="#9aa5a8"/><rect y="5" width="14" height="7" rx="1" fill="#8f9c9f"/><rect x="3" y="9" width="8" height="6" fill="#cfe0c9" stroke="#8f9c9f"/></svg>
<svg class="a" style="left:1767px;top:431px" width="15" height="13"><rect width="15" height="13" fill="#f3c650"/><path d="M0 0 L7.500 7 L15 0" fill="#f7d67a"/></svg>
<svg class="a" style="left:1792px;top:431px" width="16" height="15"><rect x="1" y="3" width="11" height="11" fill="#eee" stroke="#9a9a9a" stroke-width="1.500"/><path d="M5 10 L13 2" stroke="#4aa832" stroke-width="2.500"/><path d="M8 1 H15 V8Z" fill="#4aa832"/></svg>

<div class="t" style="left:1047px;top:461px;font-size:11.570px;font-weight:bold;color:#222">As Christmas approaches, Amazon workers strike again?</div>
<div class="t" style="left:1047px;top:475px;font-size:11.950px;font-weight:bold;color:#222">Thursday, December 22, 2022 07:00:15 AM (GMT)</div>
<div style="left:1047px;top:523px;width:132px;height:20px;background:#17aee6"></div>
<div class="t" style="left:1050px;top:526px;font-size:11.700px;color:#fff">Truvalue Spotlight Event</div>
<div class="t" style="left:1190px;top:526px;font-size:12px;color:#333">Amazon.com Inc</div>
<div class="t" style="left:1047px;top:551px;font-size:15.040px;line-height:18px;height:18px;font-weight:bold;color:#222">As Christmas approaches, Amazon workers strike again?</div>
<div class="t" style="left:1047px;top:572px;font-size:11.500px;color:#333">EnNews.com</div>
<div class="t" style="left:1150px;top:572px;font-size:11.500px;color:#333">First Article Date: 18 Dec, 2022</div>
<div class="t" style="left:1047px;top:597px;font-size:11.600px;color:#333">Category: Labor Practices |</div>
<svg class="a" style="left:1190px;top:597px" width="14" height="14"><circle cx="7" cy="7" r="7" fill="#c31f3a"/><rect x="3" y="6" width="8" height="2" fill="#fff"/></svg>
<div class="t" style="left:1207px;top:597px;font-size:11.600px;color:#333">Sentiment: Negative | Standout Level: <b style="color:#222">Low</b></div>
<div class="t" style="left:1047px;top:613px;font-size:11.500px;color:#333">20 data points in 3 days</div>

<div class="bu" style="left:1069px;top:644px"></div><div class="dl" style="top:639px">On Sunday, the German trade union Verdi publicly announced it would urge Amazon warehouse workers across Germany to strike in the</div>
<div class="dl" style="top:652px">coming days to complain about pay and to maximize disruption to the on line retailer's pre-Christmas sales business.</div>
<div class="bu" style="left:1069px;top:671px"></div><div class="dl" style="top:666px">The union said German inflation was now a serious problem, while Amazon did not do what it should on wages, raising wages significantly</div>
<div class="dl" style="top:679px">less than inflation.</div>
<div class="bu" style="left:1069px;top:697px"></div><div class="dl" style="top:692px">Germany is understood to be Amazon's second largest market after the US, and since 2013 Verdi has been trying to organize strikes in</div>
<div class="dl" style="top:705px">Amazon's German <span class="hl">distribution centers to <span class="w">protest</span> the poor working conditions facing its employees.</span></div>
<div class="bu" style="left:1069px;top:724px"></div><div class="dl" style="top:719px"><span class="hl">In addition, the <span class="w">union</span> added that arranging alternate strikes between workers at different distribution centers would</span> effectively avoid</div>
<div class="dl" style="top:732px">management intervention.</div>
<div class="bu" style="left:1069px;top:751px"></div><div class="dl" style="top:746px">The biggest role of collective bargaining agreements is to determine the wage and leave standards for a certain industry within a certain</div>
<div class="dl" style="top:759px">range (such as geographical, ownership, etc.), to achieve a balance that will satisfy both employers and employees, while also enabling</div>
<div class="dl" style="top:772px">the industry to develop in a sustainable and healthy manner.</div>
<div class="t" style="left:1047px;top:796px;font-size:11.500px;color:#333">Summarized by Truvalue Labs, a FactSet Company | <span style="color:#3a3a9a;text-decoration:underline">Read Full Article</span></div>

<div style="left:1800px;top:453px;width:8px;height:397px;background:#f3f3f3"></div>
<div style="left:1800px;top:470px;width:8px;height:300px;background:#bdbdbd"></div>
<svg class="a" style="left:1801px;top:459px" width="7" height="5"><path d="M3.500 0 L7 5 H0Z" fill="#9a9a9a"/></svg>
<svg class="a" style="left:1801px;top:840px" width="7" height="5"><path d="M0 0 H7 L3.500 5Z" fill="#9a9a9a"/></svg>

<div style="left:262px;top:850px;width:1546px;height:1px;background:#dedede"></div>
<div style="left:250px;top:860px;width:1558px;height:5px;background:#f4f4f4;border-top:1px solid #e6e6e6;box-sizing:border-box"></div>
<div style="left:1697px;top:855px;width:111px;height:10px;background:#fff;border-left:1px solid #eee;border-top:1px solid #eee;box-sizing:border-box"></div>
</div></body></html>
